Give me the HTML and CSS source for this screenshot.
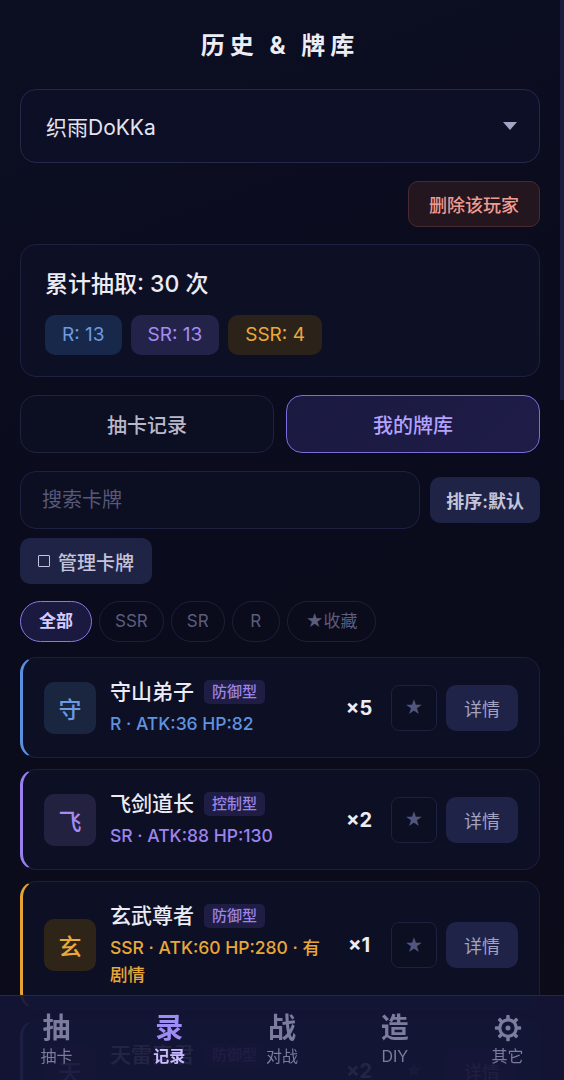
FILE: index.html
```html
<!DOCTYPE html>
<html>
<head>
  <meta charset="utf-8">
  <title>历史 & 牌库</title>
  <link rel="stylesheet" href="styles.css">
</head>
<body>
  <div class="page">
    <h1 class="title">历史 &amp; 牌库</h1>

    <div class="player-select">
      <span>织雨DoKKa</span>
      <svg class="caret" width="14" height="9" viewBox="0 0 14 9"><path d="M0 0 L14 0 L7 8 Z" fill="#a3a3c2"/></svg>
    </div>

    <div class="row-end">
      <button class="btn-danger">删除该玩家</button>
    </div>

    <div class="stats">
      <div class="stats-total">累计抽取: 30 次</div>
      <div class="stats-badges">
        <span class="badge badge-r">R: 13</span>
        <span class="badge badge-sr">SR: 13</span>
        <span class="badge badge-ssr">SSR: 4</span>
      </div>
    </div>

    <div class="tabs">
      <button class="tab">抽卡记录</button>
      <button class="tab tab-active">我的牌库</button>
    </div>

    <div class="search-row">
      <div class="search">搜索卡牌</div>
      <button class="btn-soft">排序:默认</button>
    </div>

    <button class="btn-soft btn-manage"><span class="box"></span>管理卡牌</button>

    <div class="chips">
      <span class="chip chip-active">全部</span>
      <span class="chip chip-latin">SSR</span>
      <span class="chip chip-latin">SR</span>
      <span class="chip chip-latin">R</span>
      <span class="chip">★收藏</span>
    </div>

    <div class="cards">
      <div class="card card-r">
        <div class="card-icon">守</div>
        <div class="card-info">
          <div class="card-name">守山弟子 <span class="tag">防御型</span></div>
          <div class="card-meta">R · ATK:36 HP:82</div>
        </div>
        <div class="card-count">×5</div>
        <button class="btn-star">★</button>
        <button class="btn-detail">详情</button>
      </div>

      <div class="card card-sr">
        <div class="card-icon">飞</div>
        <div class="card-info">
          <div class="card-name">飞剑道长 <span class="tag">控制型</span></div>
          <div class="card-meta">SR · ATK:88 HP:130</div>
        </div>
        <div class="card-count">×2</div>
        <button class="btn-star">★</button>
        <button class="btn-detail">详情</button>
      </div>

      <div class="card card-ssr">
        <div class="card-icon">玄</div>
        <div class="card-info">
          <div class="card-name">玄武尊者 <span class="tag">防御型</span></div>
          <div class="card-meta">SSR · ATK:60 HP:280 · 有剧情</div>
        </div>
        <div class="card-count">×1</div>
        <button class="btn-star">★</button>
        <button class="btn-detail">详情</button>
      </div>

      <div class="card card-sr">
        <div class="card-icon">天</div>
        <div class="card-info">
          <div class="card-name">天雷真君 <span class="tag">防御型</span></div>
          <div class="card-meta">SR · ATK:92 HP:120</div>
        </div>
        <div class="card-count">×2</div>
        <button class="btn-star">★</button>
        <button class="btn-detail">详情</button>
      </div>
    </div>
  </div>

  <div class="scroll-thumb"></div>

  <nav class="tabbar">
    <div class="tabbar-item">
      <span class="tabbar-icon">抽</span>
      <span class="tabbar-label">抽卡</span>
    </div>
    <div class="tabbar-item active">
      <span class="tabbar-icon">录</span>
      <span class="tabbar-label">记录</span>
    </div>
    <div class="tabbar-item">
      <span class="tabbar-icon">战</span>
      <span class="tabbar-label">对战</span>
    </div>
    <div class="tabbar-item">
      <span class="tabbar-icon">造</span>
      <span class="tabbar-label">DIY</span>
    </div>
    <div class="tabbar-item">
      <svg class="tabbar-gear" width="30" height="30" viewBox="0 0 24 24">
        <g fill="#7c7c9e">
          <rect x="10.6" y="1.5" width="2.8" height="4" rx="0.6"/>
          <rect x="10.6" y="18.5" width="2.8" height="4" rx="0.6"/>
          <rect x="1.5" y="10.6" width="4" height="2.8" rx="0.6"/>
          <rect x="18.5" y="10.6" width="4" height="2.8" rx="0.6"/>
          <rect x="10.6" y="1.5" width="2.8" height="4" rx="0.6" transform="rotate(45 12 12)"/>
          <rect x="10.6" y="1.5" width="2.8" height="4" rx="0.6" transform="rotate(135 12 12)"/>
          <rect x="10.6" y="1.5" width="2.8" height="4" rx="0.6" transform="rotate(225 12 12)"/>
          <rect x="10.6" y="1.5" width="2.8" height="4" rx="0.6" transform="rotate(315 12 12)"/>
        </g>
        <circle cx="12" cy="12" r="6.6" fill="none" stroke="#7c7c9e" stroke-width="2.6"/>
        <circle cx="12" cy="12" r="2" fill="#7c7c9e"/>
      </svg>
      <span class="tabbar-label">其它</span>
    </div>
  </nav>
</body>
</html>
```

FILE: styles.css
```css
html {
  scrollbar-width: none;
}

html::-webkit-scrollbar {
  display: none;
}

body {
  margin: 0;
  padding: 0;
  font-family: Inter, "Noto Sans CJK SC", sans-serif;
  color: #e6e6f2;
  background: linear-gradient(160deg, #0c0e22 0%, #0a0b1c 45%, #0c0c1a 100%);
  min-height: 100vh;
}

button {
  font-family: inherit;
  cursor: pointer;
}

.page {
  width: 520px;
  padding: 0 20px 120px 20px;
}

.title {
  margin: 0;
  padding-top: 30px;
  text-align: center;
  font-size: 24px;
  line-height: 32px;
  font-weight: 700;
  letter-spacing: 5px;
  color: #ececf4;
}

.player-select {
  margin-top: 27px;
  height: 72px;
  border: 1px solid #262848;
  border-radius: 16px;
  background: #0d0f26;
  display: flex;
  align-items: center;
  justify-content: space-between;
  padding: 0 22px 0 25px;
  font-size: 21px;
  color: #e4e4f0;
}

.row-end {
  display: flex;
  justify-content: flex-end;
  margin-top: 18px;
}

.btn-danger {
  height: 46px;
  padding: 0 20px;
  border: 1px solid #4a2a32;
  border-radius: 10px;
  background: #23161f;
  color: #ee9c92;
  font-size: 18px;
  font-weight: 500;
}

.stats {
  margin-top: 17px;
  border: 1px solid #1e2040;
  border-radius: 16px;
  background: #0d0f25;
  padding: 24px 24px 21px 24px;
}

.stats-total {
  font-size: 23px;
  line-height: 30px;
  font-weight: 500;
  color: #ececf4;
}

.stats-badges {
  display: flex;
  gap: 9px;
  margin-top: 16px;
}

.badge {
  height: 40px;
  line-height: 40px;
  padding: 0 17px;
  border-radius: 10px;
  font-size: 19px;
}

.badge-r {
  background: #18284a;
  color: #6b9be2;
}

.badge-sr {
  background: #23234a;
  color: #a58cf2;
}

.badge-ssr {
  background: #2b2219;
  color: #eaa93a;
}

.tabs {
  display: flex;
  gap: 12px;
  margin-top: 18px;
}

.tab {
  flex: 1;
  height: 58px;
  border: 1px solid #20223e;
  border-radius: 16px;
  background: #0c0e22;
  color: #b8b8cc;
  font-size: 20px;
  font-weight: 500;
}

.tab-active {
  border: 1.5px solid #7d6cdc;
  background: linear-gradient(135deg, #1a1940, #1f1d48);
  color: #b4a2ff;
}

.search-row {
  display: flex;
  align-items: center;
  gap: 10px;
  margin-top: 18px;
}

.search {
  flex: 1;
  height: 56px;
  line-height: 56px;
  border: 1px solid #1e2040;
  border-radius: 16px;
  background: #0c0e22;
  padding-left: 21px;
  font-size: 20px;
  color: #585878;
}

.btn-soft {
  height: 46px;
  padding: 0 16px;
  border: none;
  border-radius: 10px;
  background: #1f2447;
  color: #c4c4da;
  font-size: 18px;
  font-weight: 600;
}

.btn-manage {
  margin-top: 9px;
  display: flex;
  align-items: center;
  gap: 8px;
  padding: 0 18px;
  font-size: 19px;
  font-weight: 500;
}

.box {
  width: 10px;
  height: 10px;
  border: 1.5px solid #c4c4da;
  border-radius: 1px;
}

.chips {
  display: flex;
  gap: 7px;
  margin-top: 17px;
}

.chip {
  height: 39px;
  line-height: 39px;
  padding: 0 18px;
  border: 1px solid #1e2038;
  border-radius: 21px;
  font-size: 17px;
  color: #5c5c7c;
}

.chip-latin {
  padding: 0 15px;
  min-width: 16px;
  text-align: center;
}

.chip-active {
  border: 1.5px solid #8a78e2;
  background: #1a1a40;
  color: #d4ccff;
  font-weight: 600;
  line-height: 38px;
}

.cards {
  display: flex;
  flex-direction: column;
  gap: 11px;
  margin-top: 15px;
}

.card {
  display: flex;
  align-items: center;
  padding: 20px 21px 20px 21px;
  border: 1px solid #1c1e3a;
  border-left: 3px solid #5b8fe0;
  border-radius: 16px;
  background: #0d0f25;
}

.card-r {
  border-left-color: #5b8fe0;
}

.card-sr {
  border-left-color: #9a80ee;
}

.card-ssr {
  border-left-color: #e6a235;
}

.card-icon {
  width: 52px;
  height: 52px;
  flex: none;
  border-radius: 10px;
  display: flex;
  align-items: center;
  justify-content: center;
  font-size: 23px;
  font-weight: 500;
  margin-right: 14px;
}

.card-r .card-icon {
  background: #1a2540;
  color: #6b9be2;
}

.card-sr .card-icon {
  background: #22213f;
  color: #a58cf2;
}

.card-ssr .card-icon {
  background: #2e2418;
  color: #eaa93a;
}

.card-info {
  flex: 1;
  min-width: 0;
}

.card-name {
  display: flex;
  align-items: center;
  gap: 10px;
  font-size: 21px;
  line-height: 28px;
  font-weight: 500;
  color: #ececf4;
}

.tag {
  height: 24px;
  line-height: 24px;
  padding: 0 8px;
  border-radius: 5px;
  background: #1f1d44;
  color: #9a84e6;
  font-size: 15px;
  font-weight: 500;
}

.card-meta {
  margin-top: 4px;
  font-size: 17.5px;
  line-height: 27px;
  font-weight: 500;
}

.card-r .card-meta {
  color: #5f93e0;
}

.card-sr .card-meta {
  color: #9c84ee;
}

.card-ssr .card-meta {
  color: #e8a838;
}

.card-count {
  width: 40px;
  margin: 0 12px 0 12px;
  text-align: center;
  font-size: 20px;
  font-weight: 700;
  color: #ececf4;
}

.btn-star {
  width: 46px;
  height: 46px;
  border: 1px solid #1e2040;
  border-radius: 8px;
  background: #0c0e22;
  color: #55557c;
  font-size: 18px;
  margin-right: 9px;
}

.btn-detail {
  width: 72px;
  height: 46px;
  border: none;
  border-radius: 10px;
  background: #1f2347;
  color: #a2a2c2;
  font-size: 18px;
}

.scroll-thumb {
  position: fixed;
  top: 0;
  right: 0;
  width: 4px;
  height: 400px;
  background: #1c1d3e;
}

.tabbar {
  position: fixed;
  left: 0;
  right: 0;
  bottom: 0;
  height: 84px;
  display: flex;
  border-top: 1px solid #24264a;
  background: rgba(20, 22, 54, 0.93);
}

.tabbar-item {
  flex: 1;
  display: flex;
  flex-direction: column;
  align-items: center;
  padding-top: 15px;
  color: #7c7c9e;
}

.tabbar-icon {
  font-size: 28px;
  line-height: 34px;
  font-weight: 700;
}

.tabbar-gear {
  margin: 2px 0 2px 0;
}

.tabbar-label {
  font-size: 16px;
  line-height: 22px;
}

.tabbar-item.active {
  color: #9d8cf2;
}

.tabbar-item.active .tabbar-label {
  color: #c9bbff;
  font-weight: 600;
}
```
